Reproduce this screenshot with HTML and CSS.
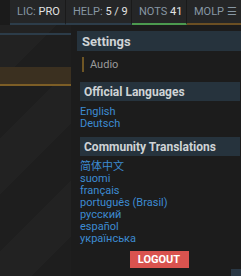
FILE: index.html
```html
<!DOCTYPE html>
<html lang="en">
<head>
    <meta charset="UTF-8">
    <meta name="viewport" content="width=device-width, initial-scale=1.0">
    <title>Menu</title>
    <link rel="stylesheet" href="styles.css">
</head>
<body>
    <div class="topbar">
        <div class="tab tab_lic"><span class="dim">LIC:</span> <b>PRO</b></div>
        <div class="tab tab_help"><span class="dim">HELP:</span> <b>5 / 9</b></div>
        <div class="tab tab_nots"><span class="dim">NOTS</span> <b>41</b></div>
        <div class="tab tab_molp"><span class="dim">MOLP &#9776;</span></div>
    </div>

    <div class="main">
        <div class="side">
            <div class="side_line"></div>
            <div class="side_active"></div>
        </div>

        <div class="panel">
            <h3 class="head head_first">Settings</h3>
            <div class="sub">Audio</div>

            <h3 class="head">Official Languages</h3>
            <div class="links">
                <a href="#">English</a>
                <a href="#">Deutsch</a>
            </div>

            <h3 class="head head_close">Community Translations</h3>
            <div class="links">
                <a href="#">简体中文</a>
                <a href="#">suomi</a>
                <a href="#">français</a>
                <a href="#">português (Brasil)</a>
                <a href="#">русский</a>
                <a href="#">español</a>
                <a href="#">українська</a>
            </div>

            <div class="logout_row">
                <button type="button" class="logout">LOGOUT</button>
            </div>
            <div class="corner"></div>
        </div>
    </div>
</body>
</html>
```

FILE: styles.css
```css
body {
    margin: 0;
    font-family: Roboto, "Noto Sans", "Noto Sans CJK SC", sans-serif;
    background-color: #1d1d1d;
    width: 241px;
    height: 276px;
    overflow: hidden;
}
.topbar {
    display: flex;
    height: 25px;
    padding-left: 10px;
    background-color: #1b1b1b;
    white-space: nowrap;
}
.tab {
    height: 23px;
    line-height: 24px;
    padding: 0 7px;
    font-size: 11px;
    background-color: #252627;
    border-right: 1px solid #1a1a1a;
    border-bottom: 2px solid #2d3d4a;
}
.tab .dim {
    color: #8797a4;
}
.tab b {
    font-weight: normal;
    color: #e2e2e2;
}
.tab_lic {
    width: 41px;
}
.tab_help {
    width: 51px;
}
.tab_nots {
    width: 40px;
    border-bottom-color: #4c9a4f;
}
.tab_molp {
    flex: 1;
    border-bottom-color: #6b4f23;
    border-right: none;
}
.main {
    display: flex;
    height: 251px;
}
.side {
    width: 71px;
    background: repeating-linear-gradient(135deg, #222222 0px, #222222 40px, #1e1e1e 40px, #1e1e1e 80px);
}
.side_line {
    height: 2px;
    margin-top: 8px;
    background-color: #2c3c49;
}
.side_active {
    height: 17px;
    margin-top: 32px;
    background-color: #3b3020;
    border-bottom: 2px solid #7d5e26;
}
.panel {
    flex: 1;
    padding: 6px 0 0 6px;
    background-color: #1c1c1c;
}
.head {
    margin: 10px 1px 0 3px;
    padding: 0 4px;
    height: 19px;
    line-height: 20px;
    font-size: 12px;
    font-weight: bold;
    color: #cfd3d6;
    background-color: #26333d;
}
.head_first {
    margin: 0;
    padding-left: 5px;
    height: 20px;
    line-height: 21px;
    font-size: 13px;
}
.head_close {
    margin-top: 7px;
}
.sub {
    margin: 6px 0 0 5px;
    padding-left: 6px;
    height: 15px;
    line-height: 15px;
    font-size: 11px;
    color: #9a9a9a;
    border-left: 2px solid #6e5524;
}
.links {
    margin: 5px 0 0 3px;
}
.links a {
    display: block;
    height: 12px;
    line-height: 12px;
    font-size: 11px;
    color: #3c8bd2;
    text-decoration: none;
}
.logout_row {
    display: flex;
    justify-content: center;
    margin-top: 6px;
}
.logout {
    height: 17px;
    width: 59px;
    padding: 0;
    border: none;
    background-color: #d9534f;
    color: white;
    font-family: Roboto, sans-serif;
    font-size: 11px;
    font-weight: bold;
}
.corner {
    width: 10px;
    height: 10px;
    margin: 1px 0 0 auto;
    background-color: #2a3845;
}
```
